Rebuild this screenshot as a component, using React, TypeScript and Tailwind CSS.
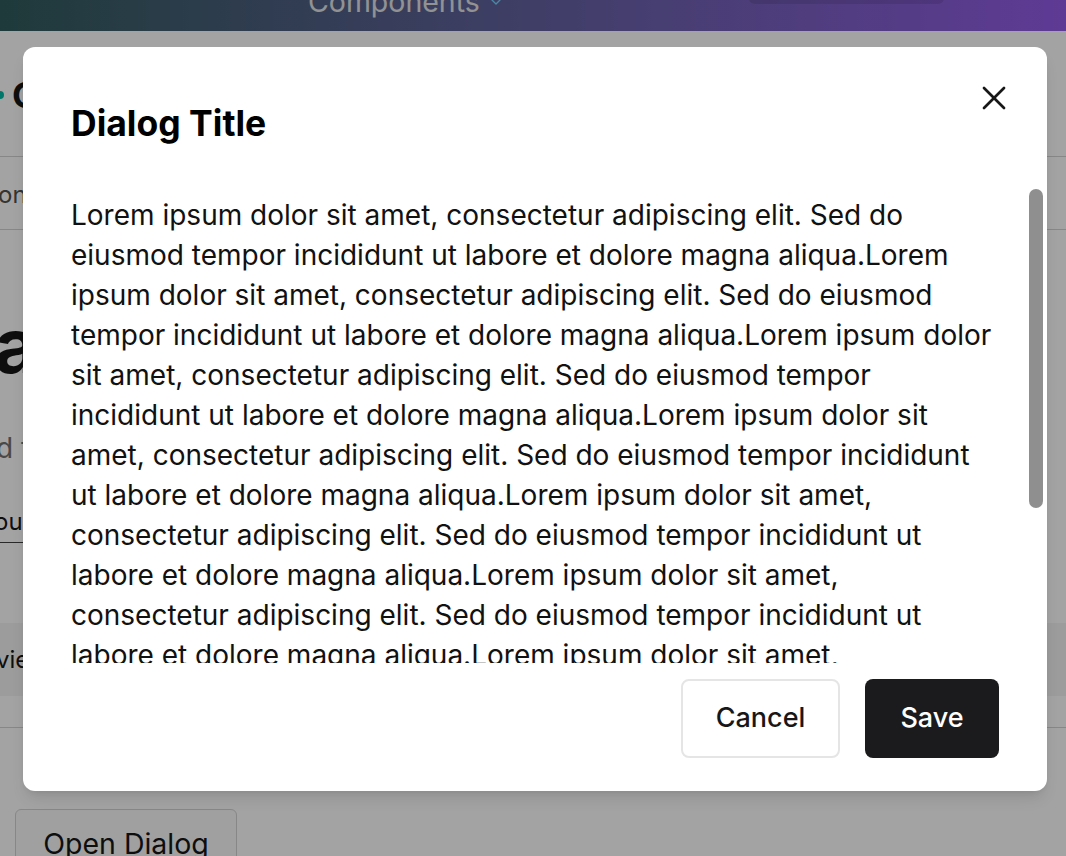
import { X, ChevronDown } from "lucide-react";

const LOREM =
  "Lorem ipsum dolor sit amet, consectetur adipiscing elit. Sed do eiusmod tempor incididunt ut labore et dolore magna aliqua.";

function Page() {
  return (
    <div className="min-h-[856px] bg-white text-neutral-900">
      <header className="flex h-[31px] overflow-hidden bg-gradient-to-r from-[#305c5c] to-[#945ce9]">
        <div className="ml-[308px] mt-[-27px] flex items-center gap-2 text-[28.5px] text-neutral-200">
          Components
          <ChevronDown size={16} className="text-sky-300" />
        </div>
        <div className="ml-[245px] mt-[-30px] h-[34px] w-[195px] rounded-md bg-black/10" />
      </header>

      <div className="flex h-[126px] items-center border-b border-neutral-300 pt-[2px]">
        <span className="ml-[-4px] h-[8px] w-[8px] rounded-full bg-teal-500" />
        <span className="ml-[8px] text-[36px] font-bold">Cosmos</span>
      </div>
      <div className="flex h-[73px] items-center border-b border-neutral-300 pt-[4px] text-[24px] text-neutral-600">
        <span className="ml-[-2px]">onboarding</span>
      </div>
      <div className="flex h-[190px] items-center pt-[40px] text-[76px] font-bold leading-none">
        <span className="ml-[-6px]">about</span>
      </div>
      <div className="flex h-[56px] items-center text-[28px] text-neutral-500">
        <span className="ml-[-4px]">d the dialog</span>
      </div>
      <div className="flex h-[94px] items-center text-[24px]">
        <span className="ml-[-6px] border-b border-neutral-700 pb-[2px]">ou</span>
      </div>
      <div className="h-[53px]" />
      <div className="flex h-[73px] items-center bg-neutral-100 text-[24px]">
        <span className="ml-[-4px]">view</span>
      </div>
      <div className="h-[32px] border-b border-neutral-300" />
      <div className="h-[81px]" />
      <button className="ml-[15px] h-[72px] w-[222px] rounded-md border border-neutral-300 bg-neutral-50 pb-[2px] text-[28.5px]">
        Open Dialog
      </button>
    </div>
  );
}

export default function App() {
  return (
    <div className="relative h-[856px] w-[1066px] overflow-hidden font-['Inter','Noto_Sans',sans-serif]">
      <Page />
      <div className="absolute inset-0 bg-black/[0.36]" />
      <div className="absolute left-[23px] top-[47px] flex w-[1024px] flex-col rounded-xl bg-white px-12 pb-[33px] pt-[57px] shadow-lg">
        <h2 className="text-[35.5px] font-bold leading-[40px] text-black">Dialog Title</h2>
        <button className="absolute right-[33px] top-[31px] text-neutral-900">
          <X size={40} strokeWidth={1.6} />
        </button>
        <div className="mt-[43px] h-[476px] overflow-hidden pt-2 text-[28px] leading-[40px] text-[#111]">
          {Array.from({ length: 10 }, () => LOREM).join("")}
        </div>
        <div className="absolute right-[4px] top-[142px] h-[319px] w-[14px] rounded-full bg-neutral-500/80" />
        <div className="mt-[16px] flex justify-end gap-[25px]">
          <button className="h-[79px] w-[159px] rounded-lg border-2 border-neutral-200 bg-white text-[27px] font-medium text-neutral-900">
            Cancel
          </button>
          <button className="h-[79px] w-[134px] rounded-lg bg-[#1b1b1d] text-[27px] font-medium text-white">
            Save
          </button>
        </div>
      </div>
    </div>
  );
}
